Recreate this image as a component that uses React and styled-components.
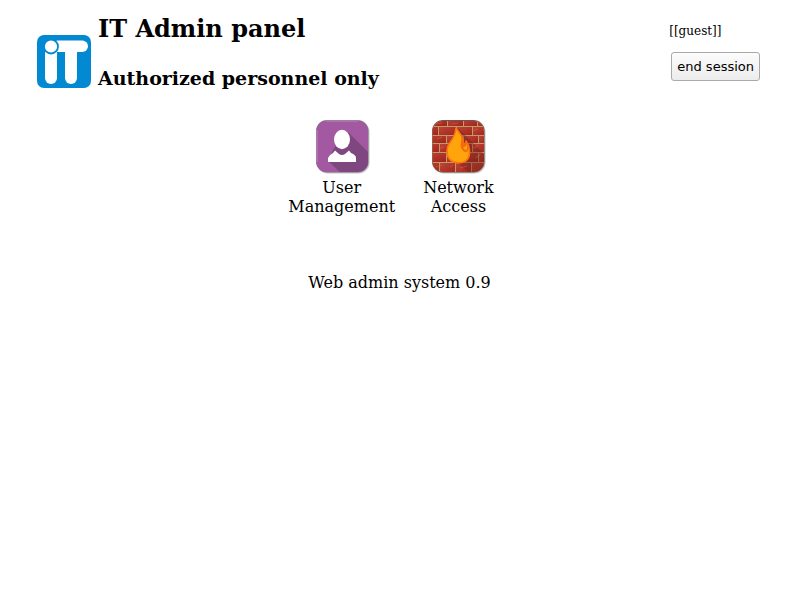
import React from "react";
import styled, { createGlobalStyle } from "styled-components";

const GlobalStyle = createGlobalStyle`
  body {
    margin: 0;
    background: #fff;
    color: #000;
    font: 16px/19px "DejaVu Serif", serif;
  }
`;

const Page = styled.div`
  padding: 12px 40px 0 37px;
`;

const Header = styled.header`
  display: flex;
  align-items: flex-start;
  gap: 7px;
`;

const Brand = styled.div`
  flex: none;
  padding-top: 23px;

  svg {
    display: block;
  }
`;

const Titles = styled.div`
  flex: 1;
`;

const Title = styled.h2`
  margin: 0 0 20px;
  line-height: 34px;
`;

const Subtitle = styled.h3`
  margin: 0;
  font-size: 19px;
  line-height: 24px;
`;

const Session = styled.div`
  display: flex;
  flex-direction: column;
  padding-top: 10px;
`;

const Guest = styled.span`
  font-size: 12px;
  line-height: 18px;
  margin: 0 0 12px -2px;
`;

const SessionButton = styled.button`
  height: 29px;
  padding: 0 5px;
  border: 1px solid #a9a9a9;
  border-radius: 3px;
  background: linear-gradient(#fcfcfc, #ececec);
  color: #000;
  font: 13px "DejaVu Sans", sans-serif;
  cursor: pointer;
`;

const Menu = styled.nav`
  display: flex;
  justify-content: center;
  gap: 28px;
  margin-top: 28px;
  padding-right: 15px;
`;

const MenuLink = styled.a`
  display: flex;
  flex-direction: column;
  align-items: center;
  color: inherit;
  text-align: center;
  text-decoration: none;
`;

const Label = styled.span`
  width: min-content;
  margin-top: 4px;
`;

const Footer = styled.footer`
  margin-top: 57px;
  padding-left: 2px;
  text-align: center;
`;

const Logo = () => (
  <svg width="54" height="53" viewBox="0 0 54 53" role="img" aria-label="iT">
    <rect width="54" height="53" rx="7" fill="#0389d1" />
    <rect x="8" y="12" width="12" height="37" rx="6" fill="#fff" />
    <rect x="15" y="5.5" width="36" height="11.5" rx="5.7" fill="#fff" />
    <rect x="28" y="8" width="12" height="41" rx="6" fill="#fff" />
    <circle cx="14" cy="11.5" r="7" fill="#fff" stroke="#0389d1" strokeWidth="1.8" />
  </svg>
);

const UserIcon = () => (
  <svg width="56" height="56" viewBox="0 0 56 56" aria-hidden="true">
    <defs>
      <clipPath id="user-tile">
        <rect x="2.5" y="3" width="51.5" height="51" rx="10" />
      </clipPath>
    </defs>
    <rect x="3" y="3" width="52.5" height="52.5" rx="11" fill="#888" opacity="0.5" />
    <rect x="2" y="2" width="52.5" height="52.5" rx="11" fill="#89728b" />
    <g clipPath="url(#user-tile)">
      <rect width="56" height="56" fill="#a259a1" />
      <path d="M34 14L56 36V56H28L14 43L20 30Z" fill="#7f477f" />
    </g>
    <path d="M12 3H44M3 12V44" stroke="#b889b8" fill="none" />
    <ellipse cx="28" cy="21.5" rx="8" ry="9.7" fill="#fff" />
    <path d="M14 44V40Q15 37 19 35L21 32.5L25 36Q28 38 31 36L35 32.5L37 35Q42 37 42 40V44Z" fill="#fff" />
  </svg>
);

const brickRows = [
  { y: -1, joints: [17, 33, 47] },
  { y: 8, joints: [8, 26, 42] },
  { y: 17, joints: [16, 33, 48] },
  { y: 25, joints: [9, 26, 42] },
  { y: 34, joints: [16, 33, 48] },
  { y: 44, joints: [9, 25, 41] },
];

const FirewallIcon = () => (
  <svg width="56" height="56" viewBox="0 0 56 56" aria-hidden="true">
    <defs>
      <clipPath id="wall-tile">
        <rect x="2.5" y="3" width="51.5" height="51" rx="10" />
      </clipPath>
      <linearGradient id="brick" x1="0" y1="0" x2="1" y2="1">
        <stop offset="0" stopColor="#bd4537" />
        <stop offset="1" stopColor="#a3231c" />
      </linearGradient>
    </defs>
    <rect x="3" y="3" width="52.5" height="52.5" rx="11" fill="#888" opacity="0.5" />
    <rect x="2" y="2" width="52.5" height="52.5" rx="11" fill="#695850" />
    <g clipPath="url(#wall-tile)">
      <rect width="56" height="56" fill="#bd9c69" />
      {brickRows.map(({ y, joints }, row) =>
        [-8, ...joints].map((x, i) => (
          <rect
            key={`${x}-${y}`}
            x={x + 1}
            y={y + 1}
            width={(joints[i] ?? 58) - x - 1}
            height={(brickRows[row + 1]?.y ?? 56) - y - 1}
            fill="url(#brick)"
          />
        ))
      )}
      <path d="M28 10L56 38V56H40L24 41Z" fill="#6b2118" opacity="0.4" />
      <path d="M5 6L12 5M22 6L28 5M43 13L48 11M7 21L12 19M8 31L14 29M20 49L23 47M6 49L12 47M30 50L37 48M45 40L50 37M43 30L48 28" stroke="#d66a4c" opacity="0.5" />
    </g>
    <path
      d="M26 10Q28 13 31 17Q34 21 33 27Q36 26 36 23Q40 29 39.5 35Q39 45 28 45Q17 44 17 33Q17 28 21 23Q25 18 26 10Z"
      fill="#ffa40a"
      stroke="#fa7410"
      strokeWidth="1.6"
      strokeLinejoin="round"
    />
    <path d="M31 18Q34 22 33 27Q36 26 36 23Q39 29 38 33Q34 36 32 31Q30 29 31 25Q32 22 31 18Z" fill="#f4690d" />
    <path d="M33 29Q36 29 37 26Q38 33 35 32Z" fill="#ffa40a" />
  </svg>
);

const items = [
  { label: "User Management", Icon: UserIcon },
  { label: "Network Access", Icon: FirewallIcon },
];

export default function App() {
  return (
    <>
      <GlobalStyle />
      <Page>
        <Header>
          <Brand>
            <Logo />
          </Brand>
          <Titles>
            <Title>IT Admin panel</Title>
            <Subtitle>Authorized personnel only</Subtitle>
          </Titles>
          <Session>
            <Guest>[[guest]]</Guest>
            <SessionButton type="button">end session</SessionButton>
          </Session>
        </Header>
        <Menu>
          {items.map(({ label, Icon }) => (
            <MenuLink href="#" key={label}>
              <Icon />
              <Label>{label}</Label>
            </MenuLink>
          ))}
        </Menu>
        <Footer>Web admin system 0.9</Footer>
      </Page>
    </>
  );
}
